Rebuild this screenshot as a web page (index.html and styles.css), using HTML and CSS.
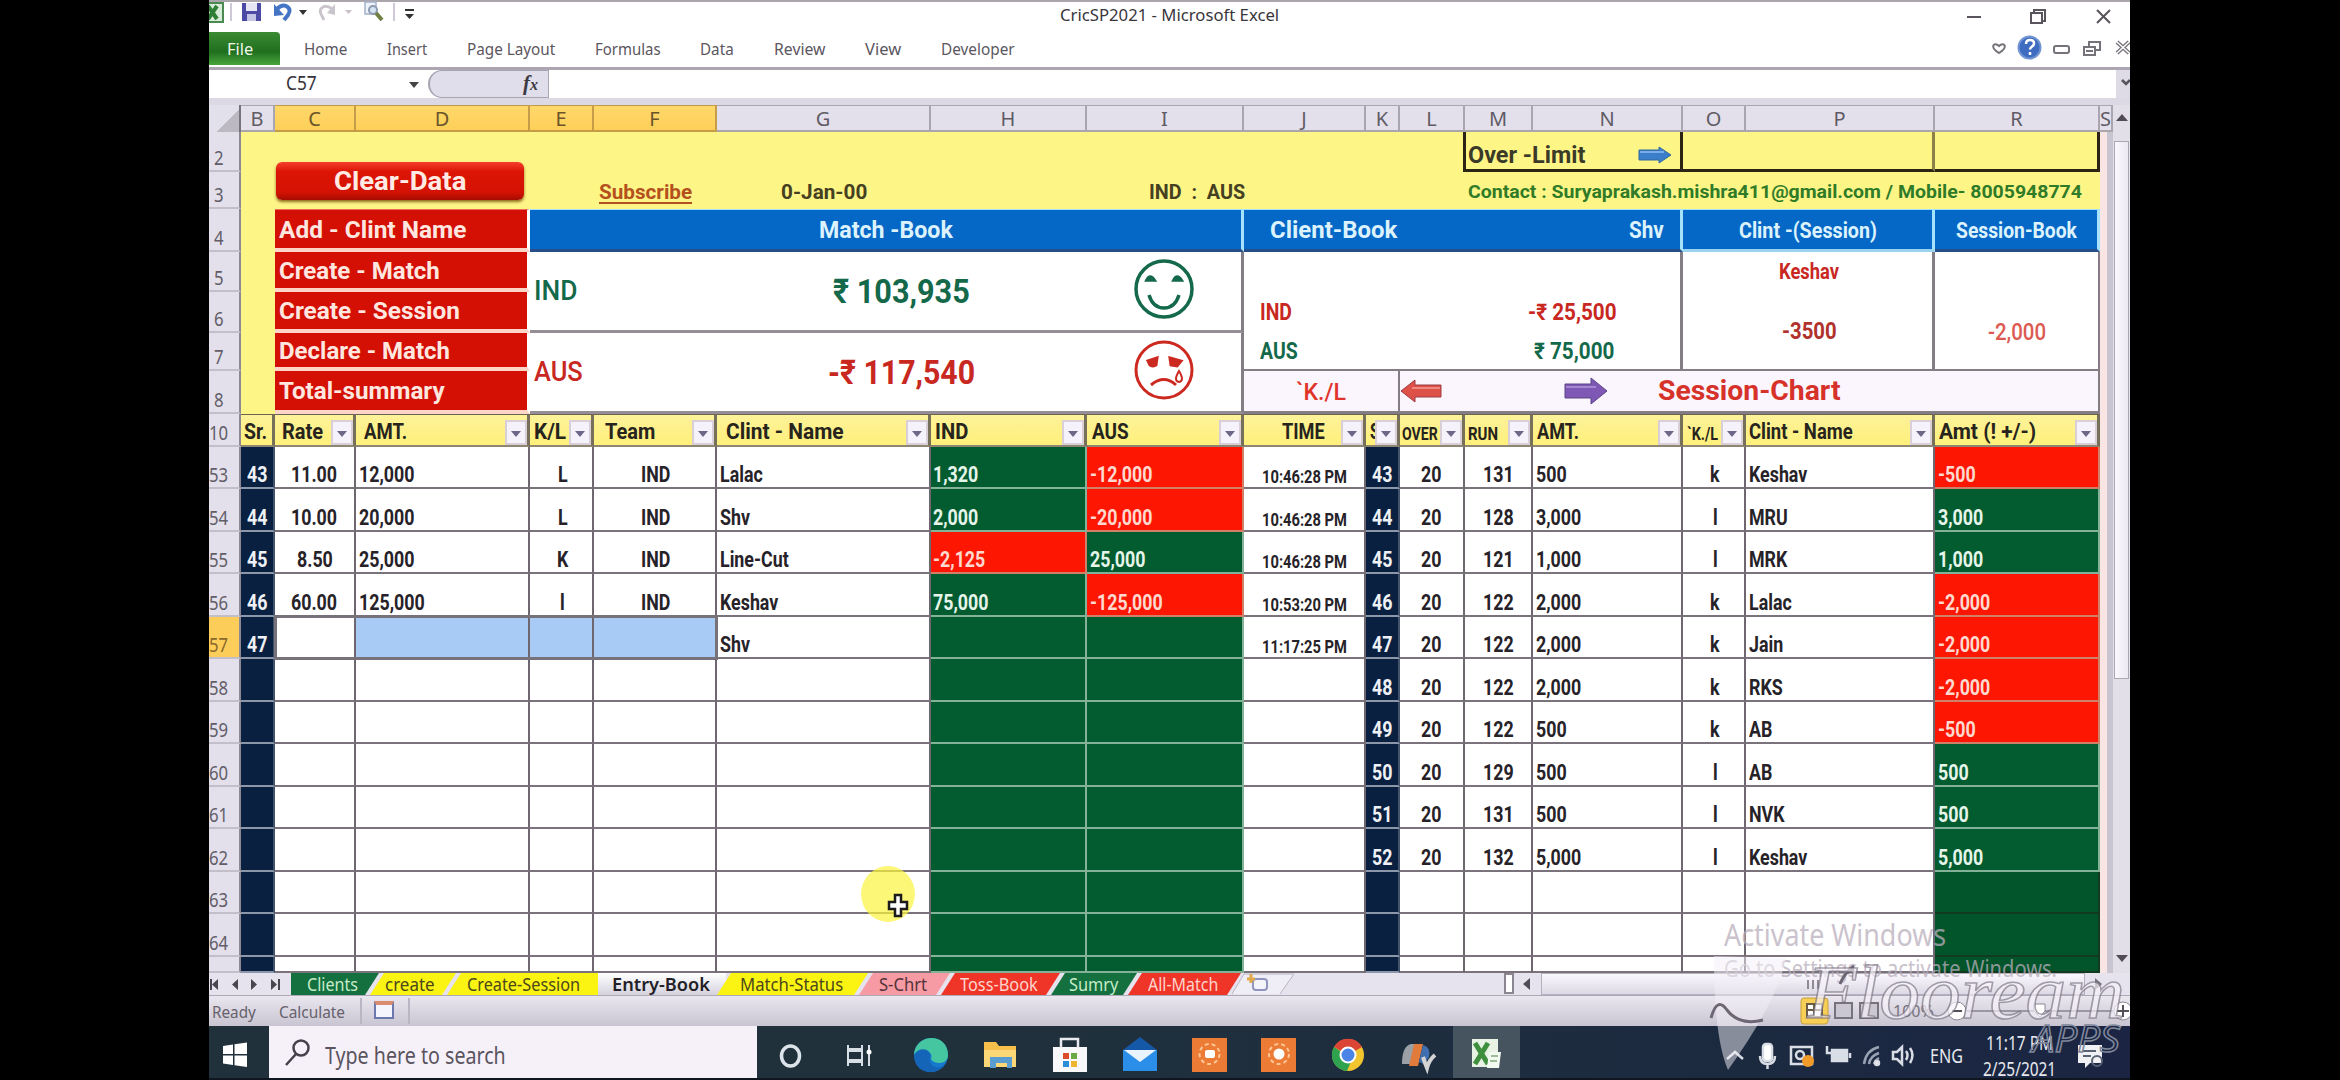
FILE: index.html
```html
<!DOCTYPE html>
<html lang="en">
<head>
<meta charset="utf-8">
<title>CricSP2021 - Microsoft Excel</title>
<link rel="stylesheet" href="styles.css">
</head>
<body>
<main class="screen">
  <header class="titlebar">
    <div class="qat">
      <svg width="206" height="26" viewBox="209 0 206 26">
        <rect x="205" y="3" width="18" height="19" fill="#d9ecd9" stroke="#4b8a50" stroke-width="2"/>
        <path d="M208 6l9 13M217 6l-9 13" stroke="#2f7f36" stroke-width="4"/>
        <path d="M231 3v18M394 3v18" stroke="#cfc8d6" stroke-width="2"/>
        <rect x="242" y="3" width="19" height="18" fill="#4c4aa5"/><rect x="246" y="3" width="11" height="8" fill="#e6e6f5"/><rect x="247" y="14" width="9" height="7" fill="#c4c4e4"/>
        <path d="M277 9q5-5 9-3 6 3 2 9l-4 5" fill="none" stroke="#4474c4" stroke-width="4"/><path d="M274 4v12l10-1z" fill="#4474c4"/>
        <path d="M299 10h8l-4 5zM405 14h9l-4.500 5z" fill="#333"/><path d="M405 10h9" stroke="#333" stroke-width="2"/>
        <path d="M332 9q-5-4-9-2-5 3-1 9l2 4" fill="none" stroke="#cac5cd" stroke-width="3"/><path d="M335 4v11l-8-2z" fill="#cac5cd"/>
        <path d="M345 10h7l-3.500 4z" fill="#c8bfc8"/>
        <rect x="365" y="2" width="11" height="12" fill="#eef2fa" stroke="#a3b3c8" stroke-width="1.500"/><circle cx="373" cy="10" r="4" fill="#d5e3f2" stroke="#8d9bb0" stroke-width="2"/><path d="M376 13l6 7" stroke="#728046" stroke-width="4"/>
      </svg>
    </div>
    <div class="caption"><span class="t" data-w="219">CricSP2021 - Microsoft Excel</span></div>
    <svg class="winbtns" width="150" height="28" viewBox="1965 0 150 28" fill="none" stroke="#5a555c" stroke-width="2">
      <path d="M1967 17h14M2097 10l13 13M2110 10l-13 13"/><rect x="2031" y="13" width="11" height="10"/><path d="M2034 13v-3h11v11h-3"/>
    </svg>
  </header>
  <nav class="ribbon">
    <span class="file"><span class="t" data-w="26">File</span></span>
    <span class="t" data-w="43">Home</span><span class="t" data-w="40">Insert</span><span class="t" data-w="88">Page Layout</span><span class="t" data-w="66">Formulas</span><span class="t" data-w="34">Data</span><span class="t" data-w="51">Review</span><span class="t" data-w="36">View</span><span class="t" data-w="74">Developer</span>
    <svg class="docbtns" width="140" height="30" viewBox="1990 33 140 30" fill="none" stroke="#77717a" stroke-width="2">
      <path d="M1999 53c-10-6-5-12 0-7c5-5 10 1 0 7z"/><circle cx="2029.500" cy="47.500" r="11" fill="#3d6cc0" stroke="#7194d2"/>
      <path d="M2026 44q0-4 4-4 4 0 4 3.500c0 3-4 3-4 6M2030 52v3" stroke="#fff" stroke-width="2.500"/>
      <rect x="2054" y="46" width="15" height="7" rx="2"/><rect x="2084" y="47" width="11" height="8"/><path d="M2089 47v-5h11v8h-5M2086 51h7"/>
      <path d="M2117 42l12 11M2129 42l-12 11" stroke-width="4"/><path d="M2117 42l12 11M2129 42l-12 11" stroke="#fff" stroke-width="1.500"/>
    </svg>
  </nav>
  <div class="formula">
    <div class="namebox"><span class="t" data-w="31">C57</span><i class="tri"></i></div>
    <div class="fx"><em>f<small>x</small></em></div>
    <div class="input"></div>
    <div class="expand"><svg width="14" height="26" viewBox="0 0 14 26" fill="none" stroke="#57525c" stroke-width="2.500"><path d="M6 10l4 4 4-4"/></svg></div>
  </div>

  <section class="sheet" id="sheet">
    <div class="corner"></div>
    <div class="yellow"></div>
    <div class="pink"></div>

    <div class="limit"><span class="t" data-w="117">Over -Limit</span>
      <svg width="34" height="18" viewBox="0 0 34 18"><path d="M1 4h20V1l12 8-12 8v-3H1z" fill="#3b7fca" stroke="#33699f"/><path d="M2 6h24" stroke="#77aee8" stroke-width="2"/></svg></div>
    <div class="limit-a"></div><div class="limit-b"></div>
    <div class="btnwrap"><button class="clear"><span class="t" data-w="132">Clear-Data</span></button></div>
    <div class="info subscribe"><span class="t" data-w="93">Subscribe</span></div>
    <div class="info date"><span class="t" data-w="86">0-Jan-00</span></div>
    <div class="info teams"><span class="t" data-w="96">IND&nbsp; :&nbsp; AUS</span></div>
    <div class="info contact"><span class="t" data-w="614">Contact : Suryaprakash.mishra411@gmail.com / Mobile- 8005948774</span></div>

    <div class="menu m1"><span class="t" data-w="187">Add - Clint Name</span></div>
    <div class="menu m2"><span class="t" data-w="161">Create - Match</span></div>
    <div class="menu m3"><span class="t" data-w="181">Create - Session</span></div>
    <div class="menu m4"><span class="t" data-w="171">Declare - Match</span></div>
    <div class="menu m5"><span class="t" data-w="166">Total-summary</span></div>

    <div class="blue match"><span class="t" data-w="134">Match -Book</span></div>
    <div class="blue client"><span class="t" data-w="127">Client-Book</span><span class="t" data-w="35">Shv</span></div>
    <div class="blue clint"><span class="t" data-w="138">Clint -(Session)</span></div>
    <div class="blue session"><span class="t" data-w="121">Session-Book</span></div>

    <div class="book ind green"><span class="t team" data-w="43">IND</span><span class="t total" data-w="137">₹ 103,935</span>
      <svg width="62" height="62" viewBox="-31 -31 62 62" fill="none" stroke="#14694a" stroke-width="3.500"><circle r="28"/><path d="M-15 6q4 13 15 13t15-13"/><path d="M-17-9q3-6 7 0zM10-9q3-6 7 0z" fill="#14694a"/></svg></div>
    <div class="book aus red"><span class="t team" data-w="49">AUS</span><span class="t total" data-w="147">-₹ 117,540</span>
      <svg width="62" height="62" viewBox="-31 -31 62 62" fill="none" stroke="#cc2a20" stroke-width="3"><circle r="28"/><path d="M-13 15q13-11 25 0"/><path d="M-16-9l9-3-1 7q-4 2-6 0zM6-12l11 3-4 5-6-1z" fill="#cc2a20"/><path d="M15 1q-6 10 0 11 6-1 0-11z" stroke-width="2"/></svg></div>

    <div class="clientbox">
      <div class="line red"><span class="t" data-w="32">IND</span><span class="t" data-w="89">-₹ 25,500</span></div>
      <div class="line green"><span class="t" data-w="38">AUS</span><span class="t" data-w="80">₹ 75,000</span></div>
    </div>
    <div class="clintbox red"><span class="t" data-w="60">Keshav</span><span class="t val" data-w="55">-3500</span></div>
    <div class="sessbox"><span class="t" data-w="58">-2,000</span></div>
    <div class="klbox"><span class="t" data-w="50">`K./L</span></div>
    <div class="chart">
      <svg width="42" height="24" viewBox="0 0 42 24"><path d="M41 6H15V1L1 12l14 11v-5h26z" fill="#dd5148" stroke="#9e3c44"/><path d="M12 9h28" stroke="#f08a80" stroke-width="2"/></svg>
      <svg class="purple" width="45" height="28" viewBox="0 0 45 28"><path d="M1 7h26V1l16 13-16 13v-6H1z" fill="#7f57b4" stroke="#5b4686"/><path d="M2 10h30" stroke="#a587d2" stroke-width="2"/></svg>
      <span class="t" data-w="182">Session-Chart</span>
    </div>
    <div class="vscroll"><i class="up"></i><b></b><i class="down"></i></div>
    <div class="selection"></div>
  </section>

  <div class="tabs">
    <svg class="nav" width="82" height="22" viewBox="209 0 82 22" fill="#4a4650"><path d="M218 6v11l-6-5.500zM210 6h2v11h-2zM238 6v11l-6-5.500zM251 6v11l6-5.500zM271 6v11l6-5.500zM278 6h2v11h-2z"/></svg>
    <div class="tab g first"><span class="t" data-w="51">Clients</span></div>
    <div class="tab y w2"><span class="t" data-w="50">create</span></div>
    <div class="tab y w3"><span class="t" data-w="113">Create-Session</span></div>
    <div class="tab active"><span class="t" data-w="98">Entry-Book</span></div>
    <div class="tab y w5"><span class="t" data-w="103">Match-Status</span></div>
    <div class="tab p w6"><span class="t" data-w="48">S-Chrt</span></div>
    <div class="tab r w7"><span class="t" data-w="78">Toss-Book</span></div>
    <div class="tab g w8"><span class="t" data-w="49">Sumry</span></div>
    <div class="tab r w9"><span class="t" data-w="70">All-Match</span></div>
    <svg class="newtab" width="64" height="22" viewBox="0 0 64 22"><path d="M0 21L12 1h50L48 21" fill="#efedf5" stroke="#b9b4c2"/><rect x="21" y="6" width="14" height="11" rx="3" fill="#f4f4fb" stroke="#8f95bd" stroke-width="2"/><path d="M15 6h8M19 1v9" stroke="#e0a94a" stroke-width="3"/></svg>
    <div class="split"></div><i class="left"></i><div class="track"><i></i><i></i><i></i></div><i class="right"></i>
  </div>
  <footer class="status">
    <span class="t" data-w="44">Ready</span><span class="t" data-w="66">Calculate</span>
    <div class="macro"><i></i></div>
    <svg class="zoom" width="340" height="30" viewBox="1790 996 340 30"><rect x="1801" y="998" width="27" height="26" rx="3" fill="#f7cf57" stroke="#c99f3a"/><path d="M1807 1004h15v13h-15zM1807 1010h15M1814 1004v13" fill="#fff" stroke="#6a5c44" stroke-width="2"/><path d="M1835 1003h17v15h-17zM1860 1003h18v15h-18z" fill="#cbc7d2" stroke="#77727e" stroke-width="2"/><text x="1893" y="1017" font-size="16" fill="#77727c">100%</text><path d="M1967 1011h146" stroke="#9b96a4" stroke-width="2"/><circle cx="1957" cy="1011" r="9" fill="#fff" stroke="#8d8894"/><circle cx="2123" cy="1011" r="9" fill="#fff" stroke="#8d8894"/><path d="M1952 1011h10M2117 1011h12M2123 1005v12" stroke="#55505a" stroke-width="2"/><path d="M2034 1004h11v7l-5 6-6-6z" fill="#fff" stroke="#8d8894"/></svg>
  </footer>
  <div class="taskbar">
    <div class="start"><svg width="26" height="26" viewBox="0 0 26 26" fill="#fff"><path d="M1 4l10-1.500V12H1zM12.500 2.300L25 0.500V12H12.500zM1 13.500h10V23L1 21.500zM12.500 13.500H25V25l-12.500-1.700z"/></svg></div>
    <div class="search"><svg width="26" height="28" viewBox="0 0 26 28" fill="none" stroke="#45404a" stroke-width="2.500"><circle cx="16" cy="9" r="7.500"/><path d="M11 15L1 26"/></svg><span class="t" data-w="181">Type here to search</span></div>
    <svg class="apps" width="764" height="54" viewBox="757 1026 764 54">
      <rect x="1453" y="1026" width="67" height="52" fill="#46545f"/>
      <ellipse cx="790.500" cy="1056" rx="9" ry="10" fill="none" stroke="#dce4ea" stroke-width="3.500"/>
      <path d="M848 1045v4h14v-4M848 1066v-4h14v4M848 1051h14v9h-14zM869 1045v21" fill="none" stroke="#d8dfe4" stroke-width="2"/><circle cx="869" cy="1052" r="2.500" fill="#fff"/>
      <circle cx="931" cy="1055" r="17" fill="#1678cf"/><path d="M914 1055c1-22 34-23 34 0 0 10-14 10-17 4 3-8-8-12-17-4z" fill="#45c6a0"/><path d="M914 1055c6-10 18-5 16 2-2 8 7 14 14 8-8 12-30 9-30-10z" fill="#1464b8"/>
      <path d="M984 1042h12l3 4h17v21h-32z" fill="#f6c04b"/><path d="M984 1050h32v17h-32z" fill="#fbd778"/><path d="M990 1068v-11h22v11h-5v-5h-11v5z" fill="#5a9dd0"/>
      <path d="M1053 1047h34v25h-34z" fill="#f8f8fb"/><path d="M1061 1048v-9h17v9" fill="none" stroke="#e9eaf0" stroke-width="2.500"/><path d="M1063 1053h6v6h-6z" fill="#dc4b2d"/><path d="M1071 1053h6v6h-6z" fill="#6aa944"/><path d="M1063 1061h6v6h-6z" fill="#2c8dd8"/><path d="M1071 1061h6v6h-6z" fill="#efb52f"/>
      <path d="M1123 1050l17-13 17 13z" fill="#1658a8"/><path d="M1123 1050h34v21h-34z" fill="#2b8ee8"/><path d="M1124 1050h32l-16 12z" fill="#e9f3fb"/>
      <rect x="1192" y="1038" width="35" height="34" fill="#ec7b36"/><circle cx="1209.500" cy="1054" r="10" fill="none" stroke="#ffc795" stroke-width="2" stroke-dasharray="4 3"/><rect x="1205" y="1050" width="10" height="8" rx="2" fill="#fff"/>
      <rect x="1261" y="1038" width="35" height="34" fill="#ec7b36"/><circle cx="1279" cy="1054" r="10" fill="none" stroke="#ffc795" stroke-width="2" stroke-dasharray="4 3"/><circle cx="1279" cy="1054" r="5.500" fill="#fff"/>
      <circle cx="1348" cy="1055" r="16" fill="#f2c52f"/><path d="M1348 1055L1334 1047a16 16 0 0 1 28 0z" fill="#dc4535"/><path d="M1334 1047a16 16 0 0 0 13 24l5-12z" fill="#2fa24f"/><circle cx="1348" cy="1055" r="7.500" fill="#4b83e6" stroke="#fff" stroke-width="2"/>
      <path d="M1402 1064q0-18 9-20h4l-5 20z" fill="#9aa0a6"/><path d="M1409 1066l5-22h9l-5 22z" fill="#e07b3b"/><path d="M1419 1062l4-17q8 2 6 12l-5 7z" fill="#3f6fb0"/><path d="M1423 1057q2 6 4 11 2-8 8-13" fill="none" stroke="#d4d4d4" stroke-width="4"/>
      <path d="M1472 1039h26v28h-26z" fill="#e8f3e6"/><path d="M1475 1043l13 21M1488 1043l-13 21" stroke="#3e8f3e" stroke-width="5"/><path d="M1489 1052h12l-2 16h-12z" fill="#f3faf1"/><path d="M1491 1056h7M1490 1061h7" stroke="#9bbd97" stroke-width="2"/>
    </svg>
    <svg class="tray" width="255" height="54" viewBox="1722 1026 255 54" fill="none" stroke="#d9dde6" stroke-width="2.500">
      <path d="M1727 1059l8-7 8 7"/><rect x="1763" y="1044" width="9" height="17" rx="3" fill="#fff"/><path d="M1760 1056q0 8 7.500 8t7.500-8M1767.500 1064v5"/>
      <rect x="1791" y="1047" width="21" height="17"/><circle cx="1800" cy="1055" r="4"/><circle cx="1808" cy="1061" r="6" fill="#f09a2a" stroke="none"/>
      <rect x="1832" y="1050" width="15" height="11" fill="#d9dde6"/><path d="M1827 1046v7h5M1850 1053v5"/>
      <path d="M1864 1064q2-14 15-17M1869 1064q1-8 10-11M1874 1064q1-4 5-6" stroke="#99a2b2"/><circle cx="1877" cy="1063" r="2" fill="#fff"/>
      <path d="M1893 1052h4l5-5v17l-5-5h-4zM1906 1051q3 4 0 9M1910 1048q5 7 0 15"/>
      <text x="1930" y="1063" fill="#e7e9ef" stroke="none" font-size="19" textLength="33" lengthAdjust="spacingAndGlyphs">ENG</text>
    </svg>
    <div class="clock"><span class="t" data-w="67">11:17 PM</span><span class="t" data-w="73">2/25/2021</span></div>
    <svg class="notif" width="30" height="30" viewBox="0 0 30 30"><path d="M3 4h24v18H15l-5 5v-5H3z" fill="#f0f1f4"/><path d="M8 10h13M8 15h8" stroke="#5b6274" stroke-width="2"/><circle cx="22" cy="20" r="5" fill="none" stroke="#5b6274" stroke-width="2"/></svg>
  </div>

  <div class="activate"><span class="t big" data-w="222">Activate Windows</span><span class="t" data-w="333">Go to Settings to activate Windows.</span></div>
  <svg class="brand" width="430" height="150" viewBox="1700 930 430 150">
    <path d="M1714 956l72 2q-8 42-58 112-14-32-14-114z" fill="#f4eff8" opacity=".5"/>
    <path d="M1711 1018q6-22 16-8 12 16 36 10" fill="none" stroke="#6d6674" stroke-width="3"/>
    <path d="M1840 984q5-12 14-18M1845 974l9-5" fill="none" stroke="#6d6674" stroke-width="3"/>
    <text class="script" x="1807" y="1018" textLength="318" lengthAdjust="spacingAndGlyphs">Flooream</text>
    <text class="apps-t" x="2032" y="1052" textLength="88" lengthAdjust="spacingAndGlyphs">APPS</text>
  </svg>
  <svg class="pointer" width="64" height="64" viewBox="0 0 64 64"><ellipse cx="28" cy="31" rx="27" ry="28" fill="#fbf43c" opacity=".7"/><path d="M35 32h6v7h6v7h-6v7h-6v-7h-6v-7h6z" fill="#fff" stroke="#1b1b1b" stroke-width="2.500"/></svg>
</main>
<script src="app.js"></script>
</body>
</html>
```

FILE: styles.css
```css
* { box-sizing: border-box; }
body { margin: 0; background: #000; font-family: "Noto Sans", "Open Sans", sans-serif; overflow: hidden; }
.screen { position: relative; width: 1921px; height: 1080px; margin-left: 209px; background: #fff; display: flex; flex-direction: column; overflow: hidden; }
.t { display: inline-block; white-space: nowrap; transform-origin: left center; line-height: 1; flex: none; }

.titlebar { height: 30px; border-top: 2px solid #aaa6ac; display: flex; justify-content: space-between; flex: none; }
.qat { width: 830px; margin-top: -2px; }
.caption { flex: 1; padding: 1px 0 0 21px; font-size: 17px; color: #3a363c; }
.winbtns { margin: -2px 15px 0 0; }
.ribbon { height: 40px; border-bottom: 3px solid #aba6b2; display: flex; align-items: center; flex: none; font-size: 17px; color: #5b5660; gap: 39.8px; }
.file { width: 71px; height: 33px; margin: 0 -16px 0 0; background: linear-gradient(#3b8a33, #1f6f1f 60%, #4aa53c); border-radius: 0 4px 0 0; color: #f0f8ea; display: flex; align-items: center; padding-left: 18px; }
.docbtns { margin-left: auto; margin-top: -2px; }
.formula { height: 35px; border-bottom: 7px solid #dcd9e4; display: flex; flex: none; }
.namebox { width: 219px; padding: 4px 9px 0 77px; display: flex; justify-content: space-between; font-size: 19px; color: #38343b; }
.tri { border: 5px solid transparent; border-top: 6px solid #444; border-bottom: 0; margin-top: 8px; height: 0; }
.fx { width: 121px; background: #e1deeb; border: 1px solid #aaa5b3; border-left-width: 2px; border-radius: 15px 0 0 15px; text-align: right; padding-right: 10px; font: bold 21px/25px "Liberation Serif", serif; color: #3e3a42; }
.fx small { font-size: 16px; }
.input { flex: 1; }
.expand { width: 14px; background: #dedbe6; }

.sheet { flex: none; height: 868px; display: grid; position: relative; font-family: Roboto, sans-serif; font-weight: 700;
  grid-template-columns: 32px 34px 81px 174px 64px 123px 214px 156px 157px 122px 34px 65px 68px 150px 63px 189px 165px 13px 17px;
  grid-template-rows: 27px 40px 37px 43px 40px 41px 38px 43px 33px 42px 43px 42px 43px 42px 43px 42px 43px 42px 43px 42px 43px 16px; }
.corner { grid-area: 1 / 1; background: linear-gradient(135deg, #e2e0ea 60%, #bcb9c2 60%); border-right: 2px solid #77727c; }
.colhead { background: #e3e0ec; border-right: 2px solid #aaa6b1; border-bottom: 2px solid #aaa6ac; border-top: 1px solid #aaa6b1; font: 400 20px/26px "Noto Sans", sans-serif; color: #605b64; text-align: center; overflow: hidden; }
.colhead.on { background: linear-gradient(#ffd86c, #fdcf57); border-color: #c59c48; color: #6b542a; }
.rowhead { grid-column: 1; background: #e3e0ec; border-right: 2px solid #8d8893; border-bottom: 2px solid #c3bfca; font: 400 19px/20px "Noto Sans", sans-serif; color: #625d67; display: flex; align-items: flex-end; padding: 0 0 2px 0; }
.rowhead.one { padding-left: 5px; }
.rowhead.on { background: #fdcd5a; color: #8a6a2c; }
.yellow { grid-area: 2 / 2 / 9 / 18; background: #fef587; }
.pink { grid-area: 2 / 18 / 23 / 19; background: linear-gradient(90deg, #f9e6e4 7px, #c9c5d0 7px); }
.limit { grid-area: 2 / 13 / 3 / 15; border: solid #2c2415; border-width: 0 3px 3px; display: flex; align-items: center; justify-content: space-between; padding: 9px 8px 0 2px; font-size: 24px; color: #3a3a28; margin-left: -2px; }
.limit-a, .limit-b { border-bottom: 3px solid #2c2415; border-right: 3px solid #8a8048; }
.limit-a { grid-area: 2 / 15 / 3 / 17; }
.limit-b { grid-area: 2 / 17; border-right-color: #2c2415; }
.btnwrap { grid-area: 2 / 3 / 4 / 5; padding: 30px 0 0 1px; }
.clear { width: 248px; height: 38px; padding: 1px 0 0; border: 0; border-radius: 6px; background: linear-gradient(#f63f2e, #dc1505 25%, #d41203 80%, #a50d02); box-shadow: 0 2px 3px #8d6a1d; color: #ffeae4; font: 700 25px/1 Roboto, sans-serif; }
.info { grid-row: 3; font-size: 20px; color: #45401f; padding-top: 8px; }
.subscribe { grid-column: 6; padding-left: 5px; color: #b4501d; }
.subscribe .t { border-bottom: 2px solid; }
.date { grid-column: 7; padding-left: 64px; }
.teams { grid-column: 9 / 11; padding-left: 62px; }
.contact { grid-column: 13 / 18; padding-left: 3px; color: #2f7b28; font-size: 19px; }
.menu { grid-column: 3 / 5; background: #d31003; border-bottom: 4px solid #ffd5c8; border-right: 3px solid #fff; color: #ffe7e0; font-size: 23px; display: flex; align-items: center; padding: 2px 0 0 4px; }
.m1 { grid-row: 4; border-top: 1px solid #f06a5a; } .m2 { grid-row: 5; } .m3 { grid-row: 6; } .m4 { grid-row: 7; } .m5 { grid-row: 8; }
.blue { grid-row: 4; background: #0668c6; border: solid #a6e2fb; border-width: 1px 3px 3px 0; border-bottom-color: #264f8a; color: #dcf3fd; font-size: 23px; display: flex; align-items: center; padding-top: 2px; }
.match { grid-column: 5 / 10; padding-left: 289px; }
.client { grid-column: 10 / 15; justify-content: space-between; padding: 2px 16px 0 26px; }
.clint { grid-column: 15 / 17; padding-left: 56px; font-size: 22px; border-bottom-color: #9bd4f0; }
.session { grid-column: 17; padding-left: 21px; font-size: 22px; }
.green { color: #14694a; } .red { color: #c8281f; }
.book { grid-column: 5 / 10; background: #fff; display: grid; grid-template-columns: 299px 307px auto; align-items: center; justify-items: start; padding-left: 4px; border-right: 3px solid #857d86; border-bottom: 3px solid #958e96; }
.book .team { font-size: 27px; font-weight: 500; } .book .total { font-size: 34px; font-weight: 700; }
.ind { grid-row: 5 / 7; } .aus { grid-row: 7 / 9; }
.aus .total { position: relative; left: -5px; }
.book svg { margin-left: -7px; margin-top: -4px; }
.clientbox { grid-area: 5 / 10 / 8 / 15; background: #fff; border-right: 3px solid #857d86; border-bottom: 2px solid #857d86; padding: 48px 63px 0 16px; font-size: 23px; }
.line { display: flex; justify-content: space-between; height: 39px; align-items: center; padding-bottom: 14px; }
.line + .line { padding-right: 3px; }
.clintbox { grid-area: 5 / 15 / 8 / 17; background: #fff; border-right: 3px solid #857d86; border-bottom: 2px solid #857d86; display: flex; flex-direction: column; gap: 36px; padding: 9px 0 0 96px; font-size: 22px; }
.clintbox .t { align-self: flex-start; }
.clintbox .val { margin-left: 3px; font-size: 24px; color: #b0322b; }
.sessbox { grid-area: 5 / 17 / 8 / 18; background: #fff; border-right: 2px solid #857d86; border-bottom: 2px solid #857d86; padding: 66px 0 0 53px; font-size: 24px; font-weight: 500; color: #dd5a52; }
.klbox { grid-area: 8 / 10 / 9 / 12; background: #fbf5fd; border-right: 2px solid #857d86; border-bottom: 3px solid #857d86; padding: 7px 0 0 52px; font-size: 24px; font-weight: 500; color: #e0342a; }
.chart { grid-area: 8 / 12 / 9 / 18; background: #fbf5fd; border-right: 2px solid #857d86; border-bottom: 3px solid #857d86; display: flex; align-items: center; color: #d63229; font-size: 28px; }
.purple { margin: 0 49px 0 122px; }

.th { background: linear-gradient(#fdf29a, #fff07a); border-right: 3px solid #76705a; border-bottom: 2px solid #8e8672; border-top: 1px solid #6b6550; display: flex; font-size: 22px; color: #26241c; position: relative; overflow: hidden; padding-top: 6px; }
.th.sm { font-size: 18px; padding-top: 10px; }
.th b { position: absolute; right: 0; top: 5px; width: 22px; height: 25px; background: #f6f2fb; border: 2px solid #d9cfd6; }
.th b::after { content: ""; position: absolute; left: 4px; top: 9px; border: 5px solid transparent; border-top: 6px solid #6d6788; border-bottom: 0; }
.td { border-right: 2px solid #6f676f; border-bottom: 2px solid #7b737b; background: #fff; display: flex; align-items: flex-end; font-size: 22px; color: #262228; padding-bottom: 1px; overflow: hidden; }
.td.c { justify-content: center; }
.td.time { font-size: 18px; }
.td.navy { background: #0a2040; border-color: #8c98aa; border-right-color: #43536c; color: #eef1f6; }
.td.pos { background: #025c30; border-color: #83b298; color: #e6f5ea; }
.td.neg { background: #fd1703; border-color: #cf8068; color: #ffd9cf; }
.td.dark { background: #02542a; border-color: #123a20; }
.td.sel { background: #a8cbf6; }
.selection { grid-area: 14 / 3 / 15 / 7; border: 3px solid #77727a; margin: -2px -1px -1px -1px; z-index: 1; }
.vscroll { grid-area: 1 / 19 / 23 / 20; background: #e2dfe9; display: flex; flex-direction: column; align-items: center; padding: 9px 0 11px; }
.vscroll b { width: 15px; height: 538px; margin-top: 20px; background: linear-gradient(90deg, #faf9fd, #ebe8f2); border: 1px solid #aca7b5; }
.up { border: 6px solid transparent; border-bottom: 7px solid #504b55; border-top: 0; }
.down { border: 6px solid transparent; border-top: 7px solid #504b55; border-bottom: 0; margin-top: auto; }

.tabs { height: 23px; flex: none; background: #e6e3ee; border-bottom: 1px solid #aea9b6; display: flex; font-size: 18px; }
.nav { flex: none; }
.tab { display: flex; align-items: center; height: 22px; flex: none; margin-left: -9px; clip-path: polygon(14px 0, 100% 0, calc(100% - 14px) 100%, 0 100%); padding-left: 15px; }
.tab.g { background: #14703f; color: #c6ecc9; } .tab.y { background: #fbf312; color: #4b471b; } .tab.p { background: #f69ba4; color: #54323a; } .tab.r { background: #ef3428; color: #ffd4cc; }
.tab.first { width: 88px; margin-left: 0; clip-path: polygon(0 0, 100% 0, calc(100% - 14px) 100%, 0 100%); padding-left: 16px; }
.w2 { width: 86px; } .tab.w3 { width: 151px; padding-left: 20px; clip-path: polygon(14px 0, 100% 0, 100% 100%, 0 100%); }
.tab.active { width: 128px; margin: 0; background: linear-gradient(#fff, #d5d2de); padding-left: 14px; font-weight: 600; color: #231f26; clip-path: none; }
.tab.w5 { width: 151px; padding-left: 23px; } .tab.w6 { width: 91px; padding-left: 20px; } .tab.w7 { width: 119px; padding-left: 19px; } .tab.w8 { width: 86px; padding-left: 18px; } .tab.w9 { width: 113px; padding-left: 20px; }
.newtab { margin-left: -9px; flex: none; }
.split { width: 10px; height: 21px; margin-left: auto; background: #fff; border: 2px solid #8b8692; flex: none; }
.left { border: 6px solid transparent; border-right: 7px solid #504b55; border-left: 0; margin: 5px 11px 0 9px; height: 0; }
.track { width: 544px; background: linear-gradient(#faf8fd, #dcd8e5); border: 1px solid #b5b0be; display: flex; justify-content: center; align-items: center; gap: 3px; flex: none; }
.track i { width: 2px; height: 9px; background: #8f8a96; }
.right { border: 6px solid transparent; border-left: 7px solid #79747e; border-right: 0; margin: 5px 28px 0 10px; height: 0; }
.status { height: 30px; flex: none; background: linear-gradient(#eae7f0, #c8c4d1); display: flex; align-items: center; font-size: 17px; color: #66616b; padding-left: 3px; gap: 23px; }
.macro { width: 50px; height: 26px; border: solid #bbb6c3; border-width: 0 2px; margin-left: -8px; padding: 3px 0 0 12px; }
.macro i { display: block; width: 20px; height: 18px; background: #f4f5fd; border: 2px solid #6b78ae; border-top: 4px solid #d98c6f; }
.zoom { margin-left: auto; }
.taskbar { height: 54px; flex: none; background: linear-gradient(90deg, #20313c 40%, #1c2a40 80%, #1b2543); border-bottom: 2px solid #10161f; display: flex; }
.start { width: 60px; display: flex; align-items: center; padding: 5px 0 0 13px; }
.search { width: 488px; background: #f6f0f9; display: flex; align-items: center; gap: 14px; padding: 6px 0 0 16px; font-size: 23px; color: #5a545e; }
.search svg { margin-top: -4px; }
.apps { margin-right: 201px; flex: none; } .tray { flex: none; }
.clock { width: 82px; color: #e7e9ef; font-size: 19px; display: flex; flex-direction: column; gap: 7px; align-items: center; padding: 8px 0 0 4px; flex: none; }
.notif { margin: 15px 0 0 16px; flex: none; }

.activate { position: absolute; left: 1515px; top: 919px; display: flex; flex-direction: column; gap: 7px; font-size: 23px; color: #b9aebb; opacity: .75; align-items: flex-start; }
.activate .big { font-size: 31px; }
.brand { position: absolute; right: 0; bottom: 0; }
.script { font: italic 76px "Liberation Serif", serif; fill: #f7f3fa; fill-opacity: .65; stroke: #6d6674; stroke-opacity: .6; stroke-width: 1.5; }
.apps-t { font: italic 38px "Noto Sans", sans-serif; fill: none; stroke: #7f879b; stroke-width: 1.5; }
.pointer { position: absolute; left: 651px; top: 863px; }
```

FILE: app.js
```js
const sheet = document.getElementById('sheet');

function cell(cls, row, col, text, opts = {}) {
  const el = document.createElement('div');
  el.className = cls;
  el.style.gridRow = row;
  el.style.gridColumn = col;
  if (opts.pad) el.style.paddingLeft = opts.pad + 'px';
  if (text !== '') {
    const s = document.createElement('span');
    s.className = 't';
    s.textContent = text;
    if (opts.w) s.dataset.w = opts.w;
    else s.dataset.scale = opts.scale || 0.81;
    el.append(s);
  }
  if (opts.filter) el.append(document.createElement('b'));
  sheet.insertBefore(el, sheet.querySelector('.selection'));
}

// column letters
'BCDEFGHIJKLMNOPRS'.split('').forEach((c, i) => {
  cell('colhead' + ('CDEF'.includes(c) ? ' on' : ''), 1, i + 2, c, { scale: 1 });
});

// row numbers
[2, 3, 4, 5, 6, 7, 8, 10, 53, 54, 55, 56, 57, 58, 59, 60, 61, 62, 63, 64, ''].forEach((n, i) => {
  cell('rowhead' + (n < 10 && n ? ' one' : '') + (n === 57 ? ' on' : ''), i + 2, 1, n, { scale: 0.88 });
});

// table header: text, left inset, width
[['Sr.', 3, 23], ['Rate', 7, 41], ['AMT.', 8, 43], ['K/L', 4, 32], ['Team', 11, 50], ['Clint - Name', 9, 118],
 ['IND', 4, 33], ['AUS', 5, 37], ['TIME', 38, 43], ['S', 4, 10], ['OVER', 2, 36], ['RUN', 3, 30], ['AMT.', 4, 42],
 ['`K./L', 4, 31], ['Clint - Name', 3, 104], ['Amt (! +/-)', 4, 97]].forEach(([t, pad, w], i) => {
  cell('th' + (['OVER', 'RUN', '`K./L'].includes(t) ? ' sm' : ''), 9, i + 2, t, { pad, w, filter: i > 0 });
});

const bets = [
  [43, '11.00', '12,000', 'L', 'IND', 'Lalac', '1,320', '-12,000', '10:46:28 PM'],
  [44, '10.00', '20,000', 'L', 'IND', 'Shv', '2,000', '-20,000', '10:46:28 PM'],
  [45, '8.50', '25,000', 'K', 'IND', 'Line-Cut', '-2,125', '25,000', '10:46:28 PM'],
  [46, '60.00', '125,000', 'l', 'IND', 'Keshav', '75,000', '-125,000', '10:53:20 PM'],
  [47, '', '', '', '', 'Shv', '', '', '11:17:25 PM']
];
const sessions = [
  [43, 20, 131, '500', 'k', 'Keshav', '-500'],
  [44, 20, 128, '3,000', 'l', 'MRU', '3,000'],
  [45, 20, 121, '1,000', 'l', 'MRK', '1,000'],
  [46, 20, 122, '2,000', 'k', 'Lalac', '-2,000'],
  [47, 20, 122, '2,000', 'k', 'Jain', '-2,000'],
  [48, 20, 122, '2,000', 'k', 'RKS', '-2,000'],
  [49, 20, 122, '500', 'k', 'AB', '-500'],
  [50, 20, 129, '500', 'l', 'AB', '500'],
  [51, 20, 131, '500', 'l', 'NVK', '500'],
  [52, 20, 132, '5,000', 'l', 'Keshav', '5,000']
];
const sign = v => (String(v).startsWith('-') ? 'neg' : 'pos');

for (let r = 0; r < 13; r++) {
  const b = bets[r] || Array(9).fill('');
  const s = sessions[r] || Array(7).fill('');
  const row = r + 10;
  const sel = r === 4 ? ' sel' : '';
  cell('td c navy', row, 2, b[0]);
  cell('td c', row, 3, b[1]);
  cell('td' + sel, row, 4, b[2], { pad: 3 });
  cell('td c' + sel, row, 5, b[3], { pad: 3 });
  cell('td c' + sel, row, 6, b[4], { pad: 3 });
  cell('td', row, 7, b[5], { pad: 3 });
  cell('td ' + sign(b[6]), row, 8, b[6], { pad: 2 });
  cell('td ' + sign(b[7]), row, 9, b[7], { pad: 3 });
  cell('td c time', row, 10, b[8], b[8] ? { w: 85 } : {});
  cell('td c navy', row, 11, s[0]);
  cell('td c', row, 12, s[1]);
  cell('td c', row, 13, s[2]);
  cell('td', row, 14, s[3], { pad: 3 });
  cell('td c', row, 15, s[4], { pad: 3 });
  cell('td', row, 16, s[5], { pad: 3 });
  cell('td ' + sign(s[6]) + (r > 9 ? ' dark' : ''), row, 17, s[6], { pad: 3 });
}

document.querySelectorAll('.t').forEach(el => {
  const natural = el.offsetWidth;
  const w = el.dataset.w ? +el.dataset.w : natural * (+el.dataset.scale || 1);
  el.style.transform = `scaleX(${w / natural})`;
  el.style.marginRight = w - natural + 'px';
});
```
